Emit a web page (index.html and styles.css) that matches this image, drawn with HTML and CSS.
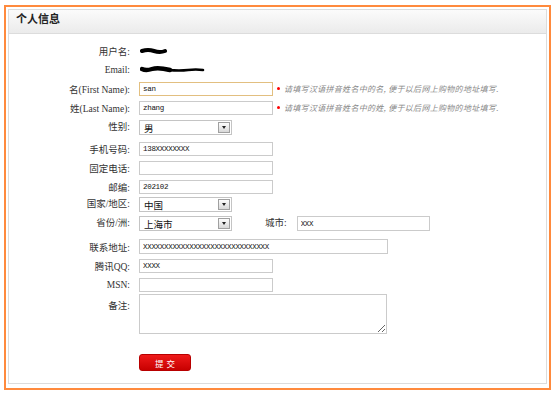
FILE: index.html
```html
<!DOCTYPE html>
<html lang="zh-CN">
<head>
  <meta charset="UTF-8">
  <title>个人信息</title>
  <link rel="stylesheet" href="styles.css">
</head>
<body>
<div class="frame">
  <div class="panel">
    <div class="panel-head">个人信息</div>

    <form class="form">
      <div class="row">
        <label class="lbl">用户名:</label>
        <svg class="blot" width="28" height="8" viewBox="0 0 28 8"><path d="M2 4 Q8 2 14 4 T25 4" stroke="#000" stroke-width="4" fill="none" stroke-linecap="round"/></svg>
      </div>
      <div class="row">
        <label class="lbl">Email:</label>
        <svg class="blot" width="66" height="8" viewBox="0 0 66 8"><path d="M2 3 Q6 5 12 3 T30 4" stroke="#000" stroke-width="4.4" fill="none" stroke-linecap="round"/><path d="M28 4 Q40 5 48 4 T63 4" stroke="#000" stroke-width="2.6" fill="none" stroke-linecap="round"/></svg>
      </div>
      <div class="row">
        <label class="lbl">名(First Name):</label>
        <input class="txt focus" type="text" value="san">
        <span class="req"></span><span class="hint">请填写汉语拼音姓名中的名, 便于以后网上购物的地址填写.</span>
      </div>
      <div class="row">
        <label class="lbl">姓(Last Name):</label>
        <input class="txt" type="text" value="zhang">
        <span class="req"></span><span class="hint">请填写汉语拼音姓名中的姓, 便于以后网上购物的地址填写.</span>
      </div>
      <div class="row pick pick-first">
        <label class="lbl">性别:</label>
        <div class="sel"><span>男</span><span class="sel-btn"></span></div>
      </div>
      <div class="row">
        <label class="lbl">手机号码:</label>
        <input class="txt" type="text" value="138XXXXXXXX">
      </div>
      <div class="row">
        <label class="lbl">固定电话:</label>
        <input class="txt" type="text" value="">
      </div>
      <div class="row">
        <label class="lbl">邮编:</label>
        <input class="txt" type="text" value="202102">
      </div>
      <div class="row pick">
        <label class="lbl">国家/地区:</label>
        <div class="sel"><span>中国</span><span class="sel-btn"></span></div>
      </div>
      <div class="row pick pick-tall">
        <label class="lbl">省份/洲:</label>
        <div class="sel"><span>上海市</span><span class="sel-btn"></span></div>
        <label class="lbl-city">城市:</label>
        <input class="txt city" type="text" value="XXX">
      </div>
      <div class="row">
        <label class="lbl">联系地址:</label>
        <input class="txt wide" type="text" value="XXXXXXXXXXXXXXXXXXXXXXXXXXXXXX">
      </div>
      <div class="row">
        <label class="lbl">腾讯QQ:</label>
        <input class="txt" type="text" value="XXXX">
      </div>
      <div class="row">
        <label class="lbl">MSN:</label>
        <input class="txt" type="text" value="">
      </div>
      <div class="row note">
        <label class="lbl">备注:</label>
        <textarea class="memo"></textarea>
      </div>

      <div class="actions">
        <button class="submit" type="button">提交</button>
      </div>
    </form>
  </div>
</div>
</body>
</html>
```

FILE: styles.css
```css
body { margin: 0; font: 9px "Liberation Serif", "Noto Sans CJK SC", serif; color: #333; background: #fff; }
.frame {
  margin: 5px 0 0 4px;
  width: 547px;
  box-sizing: border-box;
  border: 2px solid #ff8a3d;
  padding: 2px 2px 4px;
}
.panel { border: 1px solid #dcdcdc; }
.panel-head {
  height: 23px;
  line-height: 23px;
  padding-left: 7px;
  border-bottom: 1px solid #dcdcdc;
  background: linear-gradient(#fbfbfb, #ebebeb);
  font: bold 11px "Noto Sans CJK SC", sans-serif;
  color: #222;
}
.form { padding: 7px 0 12px; }
.row { display: flex; align-items: center; height: 19px; box-sizing: border-box; }
.lbl { width: 121px; flex: none; margin-right: 9px; text-align: right; white-space: nowrap; font-size: 9.5px; }
.pick { align-items: flex-start; padding-top: 1px; }
.pick .lbl { line-height: 15px; }
.pick-first { height: 22px; padding-top: 3px; }
.pick-tall { height: 22px; }
.blot { display: block; margin-left: 1px; }

.txt {
  width: 134px;
  height: 14px;
  box-sizing: border-box;
  border: 1px solid #cbcbcb;
  padding: 0 3px;
  margin: 0;
  font: 7.5px "Liberation Mono", monospace;
  letter-spacing: -0.3px;
  color: #111;
  outline: none;
}
.txt.focus { border-color: #e2bf80; }
.txt.wide { width: 249px; height: 15px; }
.txt.city { width: 133px; height: 15px; }
.req { width: 3px; height: 3px; border-radius: 50%; background: #f00; margin: 0 4px 0 4px; flex: none; }
.hint { font: italic 8px "Noto Sans CJK SC", sans-serif; letter-spacing: 0.3px; color: #888; white-space: nowrap; }

.sel {
  width: 93px;
  height: 15px;
  box-sizing: border-box;
  border: 1px solid #c4c4c4;
  display: flex;
  align-items: center;
  justify-content: space-between;
  padding: 0 1px 0 4px;
  font: 9.5px "Noto Sans CJK SC", sans-serif;
  color: #111;
}
.sel-btn {
  width: 12px;
  height: 11px;
  box-sizing: border-box;
  border: 1px solid #a0a0a0;
  background: linear-gradient(#fdfdfd, #d8d8d8);
  display: flex;
  align-items: center;
  justify-content: center;
}
.sel-btn::after {
  content: "";
  border-left: 2.5px solid transparent;
  border-right: 2.5px solid transparent;
  border-top: 3px solid #222;
}
.lbl-city { margin: 0 10px 0 33px; line-height: 15px; font-size: 9.5px; }

.note { height: 40px; align-items: flex-start; }
.note .lbl { padding-top: 4px; }
.memo {
  width: 248px;
  height: 40px;
  box-sizing: border-box;
  border: 1px solid #cbcbcb;
  margin: 0;
  resize: both;
  outline: none;
}
.actions { padding-left: 130px; margin-top: 20px; }
.submit {
  display: block;
  width: 52px;
  height: 17px;
  padding: 0 0 0 3px;
  border: 1px solid #b80000;
  border-radius: 3px;
  background: linear-gradient(#ee1a1a, #c80000);
  color: #fff;
  font: 8.5px "Noto Sans CJK SC", sans-serif;
  letter-spacing: 3px;
  cursor: pointer;
}
```
